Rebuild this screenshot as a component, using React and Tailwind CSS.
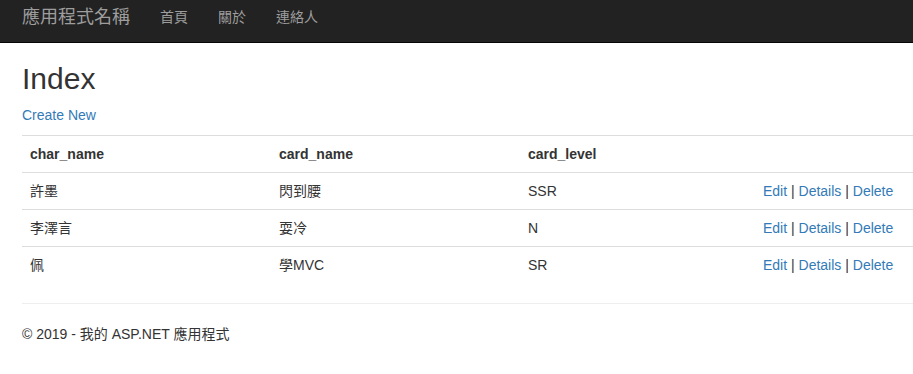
import React from 'react';

const rows = [
  { char: '許墨', card: '閃到腰', level: 'SSR' },
  { char: '李澤言', card: '耍冷', level: 'N' },
  { char: '佩', card: '學MVC', level: 'SR' },
];

const font = { fontFamily: '"Liberation Sans", "Noto Sans CJK TC", sans-serif' };

function Navbar() {
  return (
    <div className="h-[43px] bg-[#222] border-b border-[#080808] flex items-start pl-[22px] pt-[7px]">
      <a className="text-[18px] leading-5 text-[#9d9d9d] pr-[15px]">應用程式名稱</a>
      <a className="text-[14px] leading-5 text-[#9d9d9d] px-[15px]">首頁</a>
      <a className="text-[14px] leading-5 text-[#9d9d9d] px-[15px]">關於</a>
      <a className="text-[14px] leading-5 text-[#9d9d9d] px-[15px]">連絡人</a>
    </div>
  );
}

export default function App() {
  return (
    <div className="min-h-[374px] bg-white text-[#333] text-[14px] leading-5" style={font}>
      <Navbar />
      <div className="pl-[22px]">
        <h2 className="mt-[19px] mb-[10px] text-[30px] leading-[33px] font-medium">Index</h2>
        <p className="mb-[10px]">
          <a className="text-[#337ab7]">Create New</a>
        </p>
        <table className="w-full table-fixed mb-5">
          <colgroup>
            <col className="w-[249px]" />
            <col className="w-[249px]" />
            <col className="w-[235px]" />
            <col />
          </colgroup>
          <tbody>
            <tr>
              <th className="text-left font-bold p-2 border-t border-[#ddd]">char_name</th>
              <th className="text-left font-bold p-2 border-t border-[#ddd]">card_name</th>
              <th className="text-left font-bold p-2 border-t border-[#ddd]">card_level</th>
              <th className="p-2 border-t border-[#ddd]"></th>
            </tr>
            {rows.map((r) => (
              <tr key={r.char}>
                <td className="p-2 border-t border-[#ddd]">{r.char}</td>
                <td className="p-2 border-t border-[#ddd]">{r.card}</td>
                <td className="p-2 border-t border-[#ddd]">{r.level}</td>
                <td className="p-2 border-t border-[#ddd] whitespace-nowrap">
                  <a className="text-[#337ab7]">Edit</a> | <a className="text-[#337ab7]">Details</a> |{' '}
                  <a className="text-[#337ab7]">Delete</a>
                </td>
              </tr>
            ))}
          </tbody>
        </table>
        <hr className="border-t border-[#eee] mb-5" />
        <footer>
          <p>© 2019 - 我的 ASP.NET 應用程式</p>
        </footer>
      </div>
    </div>
  );
}
